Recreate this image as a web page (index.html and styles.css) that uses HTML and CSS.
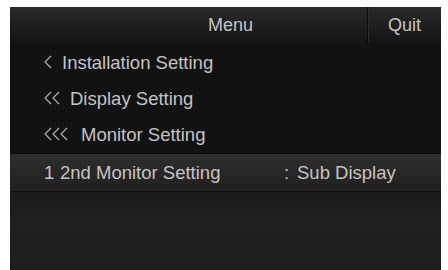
FILE: index.html
```html
<!DOCTYPE html>
<html>
<head>
<meta charset="utf-8">
<link rel="stylesheet" href="styles.css">
</head>
<body>
<div class="screen">
  <div class="header">
    <div class="title">Menu</div>
    <div class="quit">Quit</div>
  </div>
  <div class="list">
    <div class="row">
      <span class="chev"><svg width="8" height="14" viewBox="0 0 8 14"><polyline points="7,1 1,7 7,13" /></svg></span>
      <span class="label">Installation Setting</span>
    </div>
    <div class="row">
      <span class="chev"><svg width="16" height="14" viewBox="0 0 16 14"><polyline points="7,1 1,7 7,13" /><polyline points="15,1 9,7 15,13" /></svg></span>
      <span class="label">Display Setting</span>
    </div>
    <div class="row">
      <span class="chev"><svg width="24" height="14" viewBox="0 0 24 14"><polyline points="7,1 1,7 7,13" /><polyline points="15,1 9,7 15,13" /><polyline points="23,1 17,7 23,13" /></svg></span>
      <span class="label wide">Monitor Setting</span>
    </div>
    <div class="row selected">
      <span class="num">1</span>
      <span class="name">2nd Monitor Setting</span>
      <span class="colon">:</span>
      <span class="value">Sub Display</span>
    </div>
  </div>
  <div class="footer"></div>
</div>
</body>
</html>
```
FILE: styles.css
```css
html, body {
  margin: 0;
  padding: 0;
  background: #ffffff;
}
body {
  width: 448px;
  height: 270px;
  overflow: hidden;
  font-family: "Liberation Sans", Arial, sans-serif;
}
.screen {
  margin: 7px 0 0 10px;
  width: 431px;
  height: 263px;
  background: #121212;
  display: flex;
  flex-direction: column;
  color: #c4c4c4;
}
.header {
  height: 36px;
  display: flex;
  background: linear-gradient(to bottom, #2a2a2a 0%, #1e1e1e 55%, #141414 100%);
}
.title {
  flex: 1;
  font-size: 18px;
  line-height: 36px;
  text-align: center;
  padding-left: 84px;
  box-sizing: border-box;
}
.quit {
  width: 74px;
  font-size: 18px;
  line-height: 36px;
  text-align: center;
  border-left: 1px solid #0b0b0b;
  box-shadow: inset 1px 0 0 #2e2e2e;
  box-sizing: border-box;
}
.list {
  display: flex;
  flex-direction: column;
  padding-top: 2px;
}
.row {
  height: 36px;
  display: flex;
  align-items: center;
  padding-left: 34px;
  font-size: 18.5px;
}
.chev {
  display: flex;
  align-items: center;
  margin-right: 10px;
  margin-top: -2px;
}
.chev svg {
  fill: none;
  stroke: #b8b8b8;
  stroke-width: 1.1;
}
.label.wide {
  margin-left: 3px;
}
.selected {
  height: 38px;
  background: linear-gradient(to bottom, #2e2e2e 0%, #272727 50%, #202020 100%);
  border-top: 1px solid #0a0a0a;
  box-sizing: border-box;
}
.num {
  width: 16px;
}
.name {
  width: 224px;
}
.colon {
  width: 13px;
}
.footer {
  flex: 1;
  background: linear-gradient(to bottom, #1a1a1a 0%, #202020 40%, #1d1d1d 100%);
  border-top: 1px solid #101010;
}
```
